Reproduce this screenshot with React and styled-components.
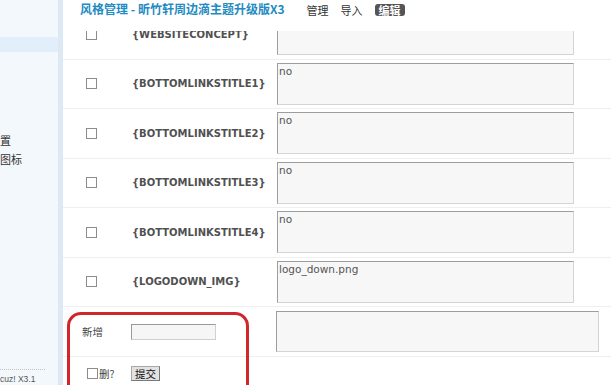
import React from "react";
import styled, { createGlobalStyle } from "styled-components";

const GlobalStyle = createGlobalStyle`
  html, body {
    margin: 0;
    padding: 0;
    width: 611px;
    height: 385px;
    overflow: hidden;
    background: #fff;
  }
  body {
    font-family: "DejaVu Sans", "Noto Sans CJK SC", sans-serif;
  }
`;

const Page = styled.div`
  display: flex;
  width: 611px;
  height: 385px;
`;

const Sidebar = styled.aside`
  width: 58px;
  height: 348px;
  flex: none;
  display: flex;
  flex-direction: column;
  padding-top: 37px;
  box-sizing: content-box;
  background: #f3f8fc;
  border-right: 5px solid #dce8f4;
  overflow: hidden;
`;

const SideActive = styled.div`
  height: 15px;
  background: #e2eef9;
`;

const Menu = styled.ul`
  list-style: none;
  margin: 79px 0 0;
  padding: 0;
`;

const MenuItem = styled.li`
  height: 19px;
  line-height: 19px;
  font-size: 11px;
  font-family: "Noto Sans CJK SC", sans-serif;
  color: #333;
  white-space: nowrap;
`;

const SideFooter = styled.div`
  margin-top: auto;
  width: 45px;
  border-top: 1px dotted #c4c4c4;
  padding-top: 4px;
  height: 11px;
  line-height: 11px;
  font-size: 8.5px;
  font-family: "Liberation Sans", Arial, sans-serif;
  color: #555;
  white-space: nowrap;
`;

const Main = styled.main`
  flex: 1;
  position: relative;
  overflow: hidden;
`;

const Header = styled.header`
  position: absolute;
  top: 0;
  left: 0;
  right: 0;
  height: 31px;
  z-index: 2;
  background: #fff;
  display: flex;
  align-items: flex-start;
  gap: 22px;
  padding: 1px 0 0 17px;
  box-sizing: border-box;
`;

const Title = styled.h3`
  margin: 0;
  font-size: 12px;
  line-height: 16px;
  font-weight: bold;
  font-family: "Noto Sans CJK SC", sans-serif;
  color: #1f8bc2;
  white-space: nowrap;
`;

const Nav = styled.nav`
  display: flex;
  align-items: center;
  gap: 12px;
  height: 18px;
`;

const NavLink = styled.span`
  font-size: 11px;
  line-height: 12px;
  font-family: "Noto Sans CJK SC", sans-serif;
  white-space: nowrap;
  color: ${(p) => (p.$active ? "#fff" : "#333")};
  background: ${(p) => (p.$active ? "#555" : "transparent")};
  padding: ${(p) => (p.$active ? "0 4px" : "0")};
  border-radius: 3px;
  font-weight: ${(p) => (p.$active ? "bold" : "normal")};
`;

const Table = styled.div`
  padding-top: 10px;
`;

const Row = styled.div`
  display: grid;
  grid-template-columns: 69px 145px 1fr;
  align-items: center;
  height: ${(p) => p.$h || 49.5}px;
  box-sizing: border-box;
  border-bottom: ${(p) => (p.$last ? "none" : "1px solid #efefef")};
`;

const Cell = styled.div`
  display: flex;
  align-items: center;
  padding-left: ${(p) => p.$indent || 0}px;
  font-size: 10.5px;
  font-family: "Noto Sans CJK SC", sans-serif;
  color: #444;
`;

const Check = styled.input.attrs({ type: "checkbox" })`
  appearance: none;
  width: 11px;
  height: 11px;
  margin: 0;
  box-sizing: border-box;
  border: 1px solid #8c8c8c;
  background: #fff;
  flex: none;
`;

const VarName = styled.span`
  font-family: "DejaVu Sans", sans-serif;
  font-weight: bold;
  font-size: 10px;
  color: #505050;
  white-space: nowrap;
`;

const TextBox = styled.textarea`
  display: block;
  width: ${(p) => (p.$wide ? 323 : 297)}px;
  height: ${(p) => (p.$wide ? 41 : 42)}px;
  margin: 0 0 0 ${(p) => (p.$wide ? -1 : 0)}px;
  box-sizing: border-box;
  padding: 1px 1px;
  resize: none;
  background: #f7f7f7;
  border: 1px solid #d4d4d4;
  border-top-color: #9d9d9d;
  border-left-color: #9d9d9d;
  font-family: "DejaVu Sans", sans-serif;
  font-size: 10.5px;
  line-height: 13px;
  color: #555;
  overflow: hidden;
`;

const SmallInput = styled.input`
  width: 85px;
  height: 16px;
  box-sizing: border-box;
  margin: 0 0 0 -1px;
  padding: 0 2px;
  background: #f6f6f6;
  border: 1px solid #d0d0d0;
  border-top-color: #999;
  border-left-color: #999;
`;

const DelLabel = styled.span`
  margin-left: 1px;
  font-size: 10.5px;
  color: #444;
`;

const SubmitBtn = styled.button`
  width: 29px;
  height: 15px;
  margin: 0 0 0 -1px;
  padding: 0;
  box-sizing: border-box;
  background: #e2e2e2;
  border: 1px solid #a8a8a8;
  border-right-color: #777;
  border-bottom-color: #777;
  font-family: "Noto Sans CJK SC", sans-serif;
  font-size: 10.5px;
  line-height: 13px;
  color: #111;
`;

const Annotation = styled.div`
  position: absolute;
  left: 4px;
  top: 312px;
  width: 182px;
  height: 90px;
  box-sizing: border-box;
  border: 3px solid #d2262d;
  border-radius: 14px;
  pointer-events: none;
`;

const vars = [
  { name: "{WEBSITECONCEPT}", value: "" },
  { name: "{BOTTOMLINKSTITLE1}", value: "no" },
  { name: "{BOTTOMLINKSTITLE2}", value: "no" },
  { name: "{BOTTOMLINKSTITLE3}", value: "no" },
  { name: "{BOTTOMLINKSTITLE4}", value: "no" },
  { name: "{LOGODOWN_IMG}", value: "logo_down.png" },
];

export default function App() {
  return (
    <>
      <GlobalStyle />
      <Page>
        <Sidebar>
          <SideActive />
          <Menu>
            <MenuItem>置</MenuItem>
            <MenuItem>图标</MenuItem>
          </Menu>
          <SideFooter>cuz! X3.1</SideFooter>
        </Sidebar>
        <Main>
          <Header>
            <Title>风格管理 - 昕竹轩周边滴主题升级版X3</Title>
            <Nav>
              <NavLink>管理</NavLink>
              <NavLink>导入</NavLink>
              <NavLink $active>编辑</NavLink>
            </Nav>
          </Header>
          <Table>
            {vars.map((v) => (
              <Row key={v.name}>
                <Cell $indent={23}>
                  <Check />
                </Cell>
                <Cell>
                  <VarName>{v.name}</VarName>
                </Cell>
                <Cell>
                  <TextBox readOnly defaultValue={v.value} />
                </Cell>
              </Row>
            ))}
            <Row $h={50}>
              <Cell $indent={19}>新增</Cell>
              <Cell>
                <SmallInput />
              </Cell>
              <Cell>
                <TextBox $wide readOnly defaultValue="" />
              </Cell>
            </Row>
            <Row $h={33} $last>
              <Cell $indent={24}>
                <Check />
                <DelLabel>删?</DelLabel>
              </Cell>
              <Cell>
                <SubmitBtn>提交</SubmitBtn>
              </Cell>
              <Cell />
            </Row>
          </Table>
          <Annotation />
        </Main>
      </Page>
    </>
  );
}
